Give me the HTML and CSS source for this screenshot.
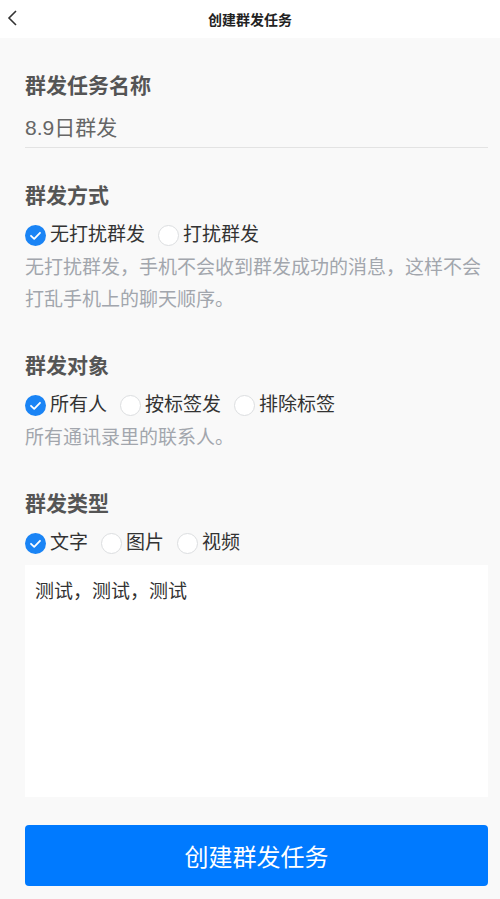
FILE: index.html
```html
<!DOCTYPE html>
<html lang="zh-CN">
<head>
<meta charset="utf-8">
<title>创建群发任务</title>
<link rel="stylesheet" href="styles.css">
</head>
<body>
<header class="navbar">
  <svg class="back" width="12" height="18" viewBox="0 0 12 18"><path d="M9 2 L2 9 L9 16" fill="none" stroke="#333" stroke-width="1.6"/></svg>
  <h1 class="nav-title">创建群发任务</h1>
</header>
<main class="page">
  <section class="sec sec-name">
    <h2 class="sec-title">群发任务名称</h2>
    <div class="name-input">8.9日群发</div>
  </section>

  <section class="sec">
    <h2 class="sec-title">群发方式</h2>
    <div class="radios">
      <label class="radio"><span class="dot on"><svg viewBox="0 0 21 21" width="21" height="21"><path d="M6 10.8 L9.2 13.8 L15 7.8" fill="none" stroke="#fff" stroke-width="1.8" stroke-linecap="round" stroke-linejoin="round"/></svg></span>无打扰群发</label>
      <label class="radio"><span class="dot"></span>打扰群发</label>
    </div>
    <p class="desc">无打扰群发，手机不会收到群发成功的消息，这样不会打乱手机上的聊天顺序。</p>
  </section>

  <section class="sec">
    <h2 class="sec-title">群发对象</h2>
    <div class="radios">
      <label class="radio"><span class="dot on"><svg viewBox="0 0 21 21" width="21" height="21"><path d="M6 10.8 L9.2 13.8 L15 7.8" fill="none" stroke="#fff" stroke-width="1.8" stroke-linecap="round" stroke-linejoin="round"/></svg></span>所有人</label>
      <label class="radio"><span class="dot"></span>按标签发</label>
      <label class="radio"><span class="dot"></span>排除标签</label>
    </div>
    <p class="desc">所有通讯录里的联系人。</p>
  </section>

  <section class="sec sec-last">
    <h2 class="sec-title">群发类型</h2>
    <div class="radios">
      <label class="radio"><span class="dot on"><svg viewBox="0 0 21 21" width="21" height="21"><path d="M6 10.8 L9.2 13.8 L15 7.8" fill="none" stroke="#fff" stroke-width="1.8" stroke-linecap="round" stroke-linejoin="round"/></svg></span>文字</label>
      <label class="radio"><span class="dot"></span>图片</label>
      <label class="radio"><span class="dot"></span>视频</label>
    </div>
    <div class="textbox">测试，测试，测试</div>
  </section>

  <button class="submit">创建群发任务</button>
</main>
</body>
</html>
```

FILE: styles.css
```css
* { box-sizing: border-box; }
html, body { margin: 0; padding: 0; }
body {
  background: #f9f9f9;
  font-family: "Liberation Sans", "Noto Sans CJK SC", sans-serif;
  width: 500px;
  height: 899px;
  overflow: hidden;
}
.navbar {
  height: 38px;
  background: #fff;
  display: flex;
  align-items: center;
  justify-content: center;
  position: relative;
}
.back {
  position: absolute;
  left: 7px;
  top: 9px;
}
.nav-title {
  margin: 0;
  font-size: 14px;
  font-weight: bold;
  color: #222;
}
.page {
  padding: 33px 12px 0 25px;
}
.sec { margin-bottom: 35px; }
.sec-name { margin-bottom: 33px; }
.sec-title {
  margin: 0;
  font-size: 21px;
  line-height: 30px;
  font-weight: bold;
  color: #555;
}
.name-input {
  margin-top: 12px;
  font-size: 21px;
  line-height: 30px;
  color: #666;
  padding-bottom: 4px;
  border-bottom: 1px solid #e3e3e3;
}
.radios {
  display: flex;
  align-items: center;
  gap: 13px;
  margin-top: 9px;
  height: 30px;
}
.radio {
  display: flex;
  align-items: center;
  gap: 4px;
  font-size: 19px;
  line-height: 30px;
  color: #333;
}
.dot {
  width: 21px;
  height: 21px;
  border-radius: 50%;
  border: 1px solid #dcdee0;
  background: #fff;
  display: inline-block;
  flex: none;
}
.dot.on {
  border: none;
  background: #1a84f5;
}
.dot svg { display: block; }
.desc {
  margin: 2px 0 0;
  font-size: 19px;
  line-height: 32px;
  color: #a2a6ad;
}
.textbox {
  margin-top: 7px;
  height: 232px;
  background: #fff;
  padding: 14px 10px;
  font-size: 19px;
  line-height: 26px;
  color: #333;
}
.sec-last { margin-bottom: 28px; }
.submit {
  display: block;
  width: 100%;
  height: 61px;
  border: none;
  border-radius: 4px;
  background: #007aff;
  color: #fff;
  font-family: "Liberation Sans", "Noto Sans CJK SC", sans-serif;
  font-size: 24px;
}
```
